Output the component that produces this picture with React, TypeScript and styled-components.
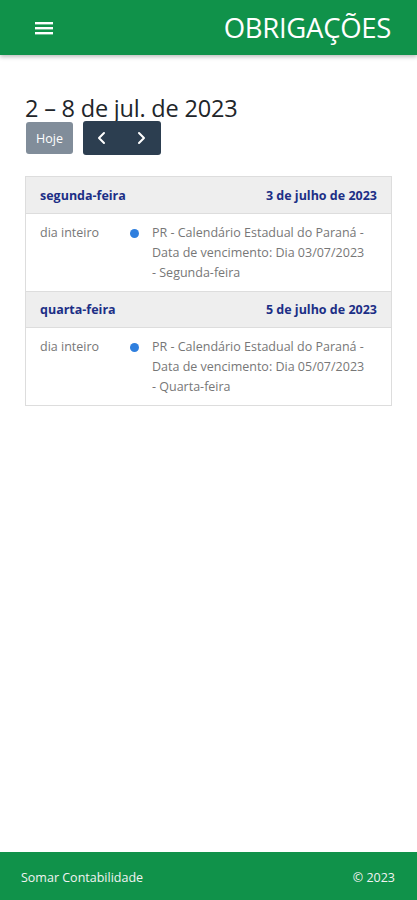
import React from 'react'
import styled, { createGlobalStyle } from 'styled-components'

const GlobalStyle = createGlobalStyle`
  html, body {
    margin: 0;
    padding: 0;
    background: #ffffff;
  }
  body {
    font-family: 'Open Sans', 'Noto Sans', sans-serif;
    color: #212529;
  }
  * {
    box-sizing: border-box;
  }
`

const green = '#10924a'

const Page = styled.div`
  display: flex;
  flex-direction: column;
  min-height: 900px;
  width: 417px;
`

const Header = styled.header`
  display: flex;
  align-items: center;
  justify-content: space-between;
  height: 55px;
  padding: 0 26px 0 35px;
  background: ${green};
  box-shadow: 0 2px 4px rgba(0, 0, 0, 0.25);
  color: #ffffff;
`

const MenuIcon = styled.svg`
  width: 18px;
  height: 16px;
`

const HeaderTitle = styled.h1`
  margin: 0;
  font-size: 27.5px;
  font-weight: 400;
  letter-spacing: -0.3px;
`

const Main = styled.main`
  flex: 1;
  padding: 38px 25px 0;
`

const ToolbarTitle = styled.h2`
  margin: 0;
  font-size: 23.5px;
  font-weight: 400;
  line-height: 30px;
  letter-spacing: -0.2px;
  color: #212529;
`

const Toolbar = styled.div`
  display: flex;
  align-items: center;
  gap: 10px;
  margin-top: -2px;
  margin-left: 1px;
`

const TodayButton = styled.button`
  height: 32px;
  padding: 0 10px;
  border: none;
  border-radius: 3px;
  background: #6c7a89;
  color: #ffffff;
  font-family: inherit;
  font-size: 12.5px;
  opacity: 0.85;
`

const ButtonGroup = styled.div`
  display: flex;
  border-radius: 3px;
  overflow: hidden;
`

const NavButton = styled.button`
  display: flex;
  align-items: center;
  justify-content: center;
  width: 39px;
  height: 34px;
  border: none;
  background: #2c3e50;
  color: #ffffff;
`

const List = styled.div`
  margin-top: 21px;
  border: 1px solid #dddddd;
`

const DayHeader = styled.div`
  display: flex;
  justify-content: space-between;
  align-items: center;
  height: 37px;
  padding: 0 14px;
  background: #eeeeee;
  border-bottom: 1px solid #dddddd;
  font-size: 12.5px;
  font-weight: 700;
  color: #1c2f86;
`

const EventRow = styled.div`
  display: grid;
  grid-template-columns: 90px 22px 1fr;
  padding: 9px 20px 8px 14px;
  font-size: 12.5px;
  line-height: 20px;
  color: #777777;

  & + ${DayHeader} {
    border-top: 1px solid #dddddd;
  }
`

const Dot = styled.span`
  width: 9px;
  height: 9px;
  margin-top: 6px;
  border-radius: 50%;
  background: #2f7fde;
`

const Footer = styled.footer`
  display: flex;
  justify-content: space-between;
  align-items: center;
  height: 48px;
  padding: 2px 22px 0 21px;
  background: ${green};
  color: #f2f2f2;
  font-size: 12.5px;
`

const days = [
  {
    weekday: 'segunda-feira',
    date: '3 de julho de 2023',
    text: 'PR - Calendário Estadual do Paraná - Data de vencimento: Dia 03/07/2023 - Segunda-feira'
  },
  {
    weekday: 'quarta-feira',
    date: '5 de julho de 2023',
    text: 'PR - Calendário Estadual do Paraná - Data de vencimento: Dia 05/07/2023 - Quarta-feira'
  }
]

const Chevron = ({ dir }: { dir: 'left' | 'right' }) => (
  <svg width="12" height="14" viewBox="0 0 12 14" fill="none">
    <path
      d={dir === 'left' ? 'M8 2 L3 7 L8 12' : 'M4 2 L9 7 L4 12'}
      stroke="#ffffff"
      strokeWidth="2"
      strokeLinecap="round"
      strokeLinejoin="round"
    />
  </svg>
)

export default function App() {
  return (
    <Page>
      <GlobalStyle />
      <Header>
        <MenuIcon viewBox="0 0 18 16">
          <rect x="0" y="2" width="18" height="2.4" fill="#ffffff" />
          <rect x="0" y="7" width="18" height="2.4" fill="#ffffff" />
          <rect x="0" y="12" width="18" height="2.4" fill="#ffffff" />
        </MenuIcon>
        <HeaderTitle>OBRIGAÇÕES</HeaderTitle>
      </Header>
      <Main>
        <ToolbarTitle>2 – 8 de jul. de 2023</ToolbarTitle>
        <Toolbar>
          <TodayButton>Hoje</TodayButton>
          <ButtonGroup>
            <NavButton>
              <Chevron dir="left" />
            </NavButton>
            <NavButton>
              <Chevron dir="right" />
            </NavButton>
          </ButtonGroup>
        </Toolbar>
        <List>
          {days.map(day => (
            <React.Fragment key={day.date}>
              <DayHeader>
                <span>{day.weekday}</span>
                <span>{day.date}</span>
              </DayHeader>
              <EventRow>
                <span>dia inteiro</span>
                <Dot />
                <span>{day.text}</span>
              </EventRow>
            </React.Fragment>
          ))}
        </List>
      </Main>
      <Footer>
        <span>Somar Contabilidade</span>
        <span>© 2023</span>
      </Footer>
    </Page>
  )
}
